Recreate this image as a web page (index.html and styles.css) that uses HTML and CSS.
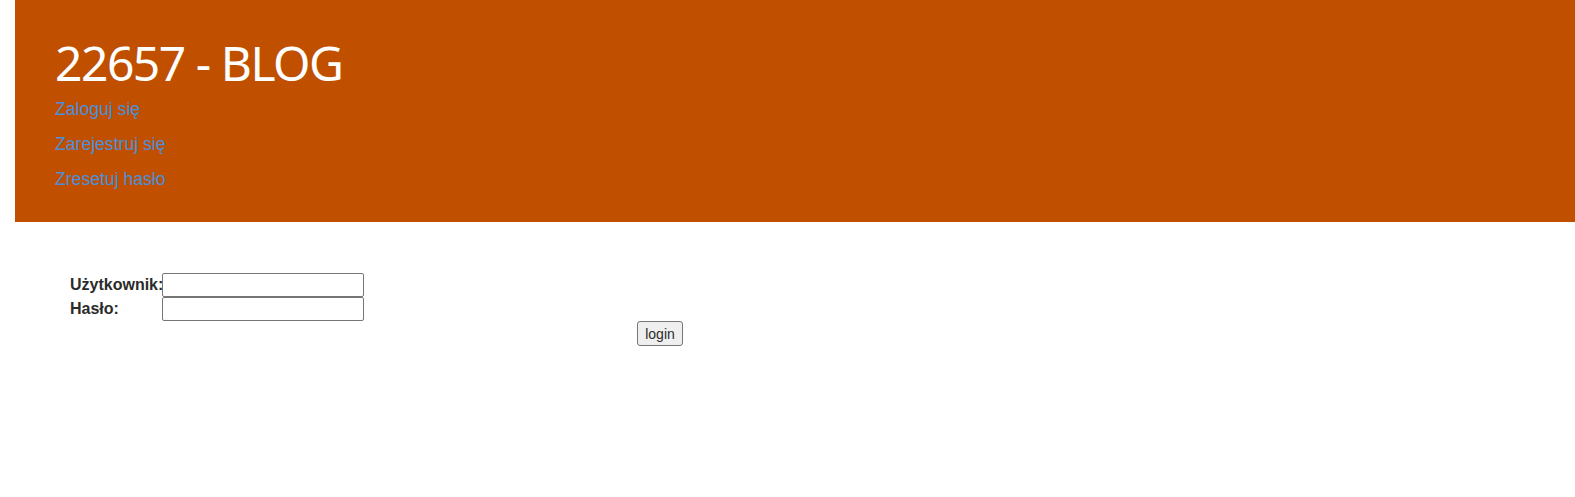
FILE: index.html
```html
<!DOCTYPE html>
<html lang="pl">
<head>
<meta charset="utf-8">
<title>22657 - BLOG</title>
<link rel="stylesheet" href="styles.css">
</head>
<body>
<header class="site-header">
  <h1 class="site-title">22657 - BLOG</h1>
  <nav class="site-nav">
    <a class="nav-link" href="#">Zaloguj się</a>
    <a class="nav-link" href="#">Zarejestruj się</a>
    <a class="nav-link" href="#">Zresetuj hasło</a>
  </nav>
</header>
<main class="content">
  <form class="login-form">
    <div class="fields">
      <label class="field-label" for="user">Użytkownik:</label>
      <input class="field-input" id="user" type="text">
      <label class="field-label" for="pass">Hasło:</label>
      <input class="field-input" id="pass" type="password">
    </div>
    <div class="actions">
      <button class="login-btn" type="submit">login</button>
    </div>
  </form>
</main>
</body>
</html>
```

FILE: styles.css
```css
html, body {
  margin: 0;
  padding: 0;
  background: #ffffff;
}

body {
  font-family: "Liberation Sans", Arial, sans-serif;
  color: #2b2b2b;
}

.site-header {
  margin-left: 15px;
  background: #c05000;
  padding: 33px 40px 25px 40px;
  display: flex;
  flex-direction: column;
}

.site-title {
  margin: 0;
  font-family: "Noto Sans", sans-serif;
  font-weight: 400;
  font-size: 48px;
  line-height: 59px;
  height: 59px;
  color: #ffffff;
  letter-spacing: -1.5px;
}

.site-nav {
  display: flex;
  flex-direction: column;
  align-items: flex-start;
}

.nav-link {
  font-family: "Liberation Sans", Arial, sans-serif;
  font-size: 17.6px;
  line-height: 35px;
  color: #4a8fdc;
  text-decoration: none;
}

.content {
  padding: 51px 0 0 70px;
}

.login-form {
  display: flex;
  flex-direction: column;
  align-items: flex-start;
}

.fields {
  display: grid;
  grid-template-columns: 92px 202px;
  row-gap: 0;
  align-items: center;
}

.field-label {
  font-weight: 700;
  font-size: 16px;
  line-height: 20px;
  color: #2b2b2b;
  white-space: nowrap;
}

.field-input {
  box-sizing: border-box;
  width: 202px;
  height: 24px;
  margin: 0;
  border: 1px solid #767676;
  border-radius: 2px;
  padding: 1px 2px;
  font-family: "Liberation Sans", Arial, sans-serif;
  font-size: 13.33px;
  background: #ffffff;
}

.actions {
  width: 1180px;
  display: flex;
  justify-content: center;
  padding-top: 0;
}

.login-btn {
  box-sizing: border-box;
  width: 46px;
  height: 25px;
  padding: 1px 6px;
  border: 1px solid #767676;
  border-radius: 3px;
  background: #efefef;
  font-family: "Liberation Sans", Arial, sans-serif;
  font-size: 14px;
  color: #2b2b2b;
}
```
